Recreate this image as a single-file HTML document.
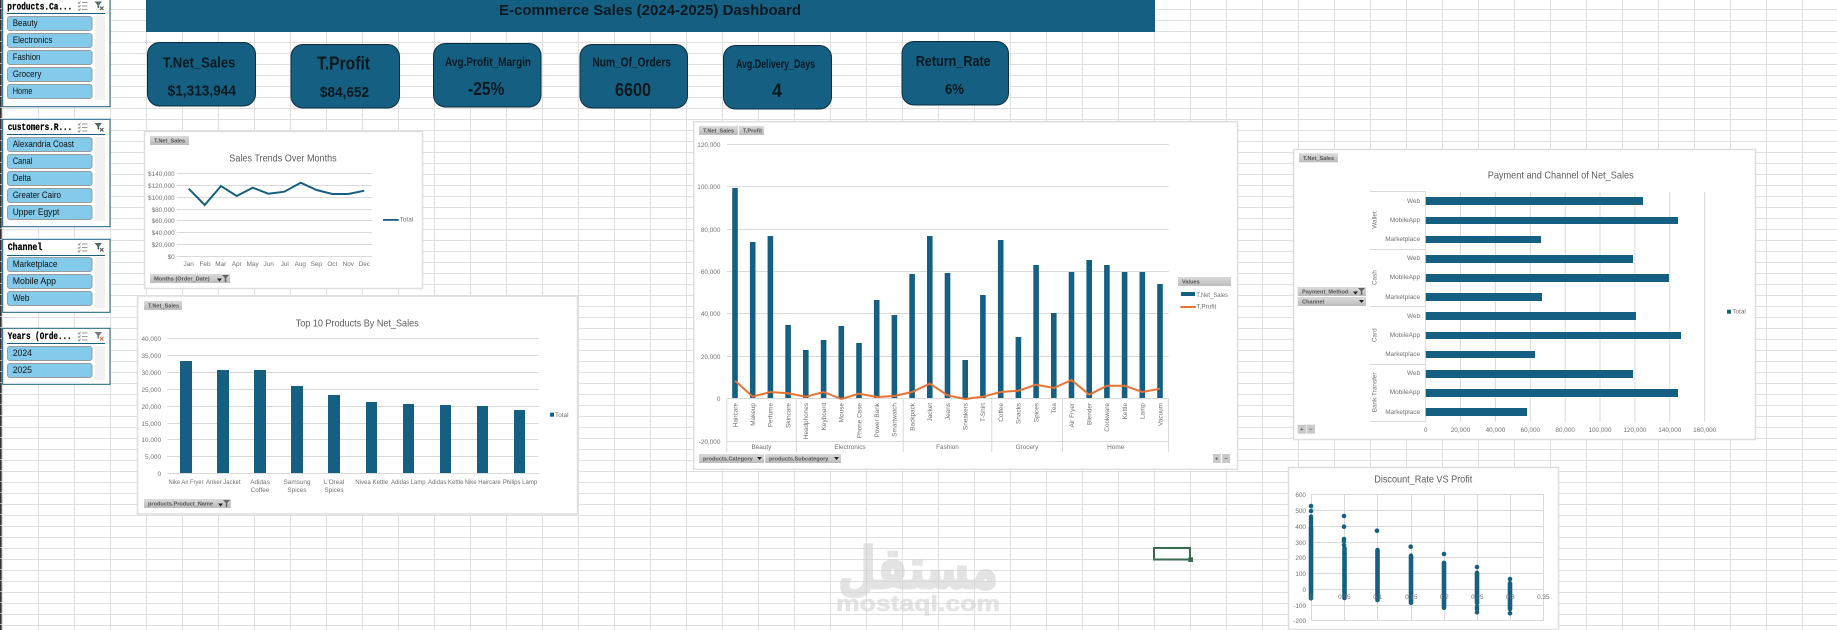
<!DOCTYPE html>
<html lang="en"><head><meta charset="utf-8"><title>E-commerce Sales Dashboard</title>
<style>
html,body{margin:0;padding:0;background:#fff;width:1837px;height:630px;overflow:hidden}
svg{display:block}
text{font-family:"Liberation Sans",sans-serif}
.a{font-size:6.4px;fill:#707070}
.e{text-anchor:end}.m{text-anchor:middle}
.ti{font-size:10.5px;fill:#5c5c5c}
.k{font-family:"Liberation Sans Narrow","Liberation Sans",sans-serif;font-weight:700;fill:#08181f}
.b{font-size:5.6px;fill:#555;font-weight:700}
.st{font-family:"Liberation Mono",monospace;font-weight:700;font-size:10px;fill:#000;stroke:#000;stroke-width:.25px}
.it{font-size:9px;fill:#111}
.card{fill:#156082;stroke:#0c2c3d;stroke-width:1}
.bar{fill:#156082}
.sl{fill:#fff;stroke:#156082;stroke-width:1}
.i{fill:#83CAEB;stroke:#9a9a9a;stroke-width:1}
.g{stroke:#d9d9d9;stroke-width:1;fill:none}
.box{fill:#fff;stroke:#dedede;stroke-width:1.5}
.btn{fill:url(#bg)}
</style></head><body>
<svg width="1837" height="630" viewBox="0 0 1837 630" xmlns="http://www.w3.org/2000/svg">
<defs>
<pattern id="grid" width="36" height="11" patternUnits="userSpaceOnUse" x="2" y="9">
<rect width="36" height="11" fill="#fff"/><rect width="1" height="11" fill="#dfdfdf"/><rect width="36" height="1" fill="#dfdfdf"/>
</pattern>
<pattern id="tick" width="3" height="11" patternUnits="userSpaceOnUse" y="9">
<rect width="1.7" height="10" fill="#333"/><rect width="1.7" y="10" height="1" fill="#aaa"/>
</pattern>
<linearGradient id="bg" x1="0" y1="0" x2="0" y2="1"><stop offset="0" stop-color="#dadada"/><stop offset="1" stop-color="#bcbcbc"/></linearGradient>
<symbol id="ms" width="11" height="9" viewBox="0 0 11 9" overflow="visible">
<path d="M1 1l1 1 1.5-2M1 4.5l1 1 1.5-2M1 8l1 1 1.5-2" fill="none" stroke="#8a8a8a" stroke-width="1"/>
<path d="M5 1h5.5M5 4.500h5.5M5 8h5.5" fill="none" stroke="#9a9a9a" stroke-width="1"/>
</symbol>
<symbol id="fc" width="10" height="9" viewBox="0 0 10 9" overflow="visible">
<path d="M0 0h7.5L4.6 3.500V7L3 6V3.500Z" fill="#4b6b60"/>
<path d="M5.500 5l3.500 3.500M9 5L5.500 8.500" stroke="#555" stroke-width="1.2"/>
</symbol>
<symbol id="fcr" width="10" height="9" viewBox="0 0 10 9" overflow="visible">
<path d="M0 0h7.5L4.6 3.500V7L3 6V3.500Z" fill="#777"/>
<path d="M5.500 5l3.500 3.500M9 5L5.500 8.500" stroke="#d9784a" stroke-width="1.2"/>
</symbol>
<symbol id="fl" width="12" height="7" viewBox="0 0 12 7" overflow="visible">
<path d="M0 3.500h5L2.500 6.500Z" fill="#222"/><path d="M5 0h7L9.300 3V7H7.800V3Z" fill="#666"/>
</symbol>
</defs>

<rect width="1837" height="630" fill="url(#grid)"/>
<rect width="2" height="630" fill="url(#tick)"/>

<!-- watermark -->
<g opacity=".6" fill="#d2d2d2">
<text x="918" y="588" class="m" font-size="57" font-weight="700" style="font-family:'DejaVu Sans',sans-serif" stroke="#d2d2d2" stroke-width="2.5" textLength="160" lengthAdjust="spacingAndGlyphs">مستقل</text>
<text x="836" y="611" font-size="22" font-weight="700" stroke="#d2d2d2" stroke-width=".6" textLength="164" lengthAdjust="spacingAndGlyphs">mostaql.com</text>
</g>

<!-- selected cell -->
<rect x="1154" y="548" width="36" height="11.5" fill="none" stroke="#3a6b52" stroke-width="2"/>
<rect x="1188.3" y="557.3" width="4.7" height="4.7" fill="#3a6b52"/>

<!-- header -->
<rect x="146" y="0" width="1009" height="32" fill="#156082"/>
<text x="499" y="15" font-size="15" font-weight="700" fill="#08181f" textLength="302" lengthAdjust="spacingAndGlyphs">E-commerce Sales (2024-2025) Dashboard</text>

<!-- KPI cards -->
<rect class="card" x="147.5" y="42.5" width="108" height="63.5" rx="12"/>
<rect class="card" x="291" y="44.5" width="108.5" height="63.5" rx="12"/>
<rect class="card" x="433.5" y="43.5" width="107.5" height="63.5" rx="12"/>
<rect class="card" x="580" y="44.5" width="107.5" height="63.5" rx="12"/>
<rect class="card" x="723.5" y="45.5" width="108" height="63.5" rx="12"/>
<rect class="card" x="902" y="41.5" width="106.5" height="63.5" rx="12"/>
<text class="k" x="162.6" y="67.5" font-size="15" textLength="72.8" lengthAdjust="spacingAndGlyphs">T.Net_Sales</text>
<text class="k" x="167.6" y="95.5" font-size="15" textLength="68.4" lengthAdjust="spacingAndGlyphs">$1,313,944</text>
<text class="k" x="317" y="69.5" font-size="18" textLength="53" lengthAdjust="spacingAndGlyphs">T.Profit</text>
<text class="k" x="320" y="97" font-size="15" textLength="49" lengthAdjust="spacingAndGlyphs">$84,652</text>
<text class="k" x="445" y="66" font-size="12" textLength="86" lengthAdjust="spacingAndGlyphs">Avg.Profit_Margin</text>
<text class="k" x="468" y="95" font-size="18" textLength="36.4" lengthAdjust="spacingAndGlyphs">-25%</text>
<text class="k" x="592.4" y="66.7" font-size="13" textLength="78.6" lengthAdjust="spacingAndGlyphs">Num_Of_Orders</text>
<text class="k" x="615" y="96" font-size="18" textLength="36" lengthAdjust="spacingAndGlyphs">6600</text>
<text class="k" x="736" y="68" font-size="11.5" textLength="79" lengthAdjust="spacingAndGlyphs">Avg.Delivery_Days</text>
<text class="k" x="772" y="97" font-size="19" textLength="10" lengthAdjust="spacingAndGlyphs">4</text>
<text class="k" x="915.7" y="66" font-size="15" textLength="75" lengthAdjust="spacingAndGlyphs">Return_Rate</text>
<text class="k" x="945" y="94" font-size="14.5" textLength="19" lengthAdjust="spacingAndGlyphs">6%</text>

<!-- slicer 1 -->
<rect class="sl" x="2.7" y="-5" width="107.3" height="111.7"/>
<text class="st" x="7.3" y="9.3" textLength="65" lengthAdjust="spacingAndGlyphs">products.Ca...</text>
<use href="#ms" x="77" y="1.5"/><use href="#fc" x="94.5" y="1.5"/>
<rect x="7" y="13" width="98" height="1" fill="#156082"/>
<rect x="95" y="16" width="10" height="84" fill="#f1f1f1"/>
<rect class="i" x="7.5" y="16.5" width="84.5" height="14" rx="2.5"/><text class="it" x="12.7" y="26" textLength="25" lengthAdjust="spacingAndGlyphs">Beauty</text>
<rect class="i" x="7.5" y="33.5" width="84.5" height="14" rx="2.5"/><text class="it" x="12.7" y="43" textLength="39.7" lengthAdjust="spacingAndGlyphs">Electronics</text>
<rect class="i" x="7.5" y="50.5" width="84.5" height="14" rx="2.5"/><text class="it" x="12.7" y="60" textLength="27.7" lengthAdjust="spacingAndGlyphs">Fashion</text>
<rect class="i" x="7.5" y="67.5" width="84.5" height="14" rx="2.5"/><text class="it" x="12.7" y="77" textLength="28.7" lengthAdjust="spacingAndGlyphs">Grocery</text>
<rect class="i" x="7.5" y="84.5" width="84.5" height="14" rx="2.5"/><text class="it" x="12.7" y="94" textLength="19.7" lengthAdjust="spacingAndGlyphs">Home</text>

<!-- slicer 2 -->
<rect class="sl" x="2.7" y="119.3" width="107.3" height="107.4"/>
<text class="st" x="7.7" y="130" textLength="64.6" lengthAdjust="spacingAndGlyphs">customers.R...</text>
<use href="#ms" x="77" y="123"/><use href="#fc" x="94.5" y="123"/>
<rect x="7" y="134" width="98" height="1" fill="#156082"/>
<rect x="95" y="137" width="10" height="84" fill="#f1f1f1"/>
<rect class="i" x="7.5" y="137.5" width="84.5" height="14" rx="2.5"/><text class="it" x="12.7" y="147" textLength="61.3" lengthAdjust="spacingAndGlyphs">Alexandria Coast</text>
<rect class="i" x="7.5" y="154.5" width="84.5" height="14" rx="2.5"/><text class="it" x="12.7" y="164" textLength="19.7" lengthAdjust="spacingAndGlyphs">Canal</text>
<rect class="i" x="7.5" y="171.5" width="84.5" height="14" rx="2.5"/><text class="it" x="12.7" y="181" textLength="18.3" lengthAdjust="spacingAndGlyphs">Delta</text>
<rect class="i" x="7.5" y="188.5" width="84.5" height="14" rx="2.5"/><text class="it" x="12.7" y="198" textLength="48.3" lengthAdjust="spacingAndGlyphs">Greater Cairo</text>
<rect class="i" x="7.5" y="205.5" width="84.5" height="14" rx="2.5"/><text class="it" x="12.7" y="215" textLength="46.7" lengthAdjust="spacingAndGlyphs">Upper Egypt</text>

<!-- slicer 3 -->
<rect class="sl" x="2.7" y="239.3" width="107.3" height="73"/>
<text class="st" x="7.7" y="250" textLength="34.6" lengthAdjust="spacingAndGlyphs">Channel</text>
<use href="#ms" x="77" y="243"/><use href="#fc" x="94.5" y="243"/>
<rect x="7" y="255" width="98" height="1" fill="#156082"/>
<rect x="95" y="257" width="10" height="51" fill="#f1f1f1"/>
<rect class="i" x="7.5" y="257.5" width="84.5" height="14" rx="2.5"/><text class="it" x="12.7" y="267" textLength="44.7" lengthAdjust="spacingAndGlyphs">Marketplace</text>
<rect class="i" x="7.5" y="274.5" width="84.5" height="14" rx="2.5"/><text class="it" x="12.7" y="284" textLength="43.3" lengthAdjust="spacingAndGlyphs">Mobile App</text>
<rect class="i" x="7.5" y="291.5" width="84.5" height="14" rx="2.5"/><text class="it" x="12.7" y="301" textLength="16.7" lengthAdjust="spacingAndGlyphs">Web</text>

<!-- slicer 4 -->
<rect class="sl" x="2.7" y="328.3" width="107.3" height="56"/>
<text class="st" x="7.7" y="339" textLength="64" lengthAdjust="spacingAndGlyphs">Years (Orde...</text>
<use href="#ms" x="77" y="332"/><use href="#fcr" x="94.5" y="332"/>
<rect x="7" y="343" width="98" height="1" fill="#156082"/>
<rect x="95" y="346" width="10" height="34" fill="#f1f1f1"/>
<rect class="i" x="7.5" y="346.5" width="84.5" height="14" rx="2.5"/><text class="it" x="12.7" y="356" textLength="19.3" lengthAdjust="spacingAndGlyphs">2024</text>
<rect class="i" x="7.5" y="363.5" width="84.5" height="14" rx="2.5"/><text class="it" x="12.7" y="373" textLength="19.3" lengthAdjust="spacingAndGlyphs">2025</text>

<!-- chart 1 sales trends -->
<rect class="box" x="144.5" y="131.5" width="278" height="157"/>
<rect class="btn" x="150" y="136" width="39" height="9"/>
<text class="b" x="154" y="142.5">T.Net_Sales</text>
<text class="ti" x="229.3" y="161.7" textLength="107.4" lengthAdjust="spacingAndGlyphs">Sales Trends Over Months</text>
<path class="g" d="M176.7 173.5H372.3M176.7 185.5H372.3M176.7 197.5H372.3M176.7 209.5H372.3M176.7 220.5H372.3M176.7 232.5H372.3M176.7 244.5H372.3M176.7 256.5H372.3"/>
<g class="a e">
<text x="174.7" y="175.8">$140,000</text><text x="174.7" y="187.8">$120,000</text><text x="174.7" y="199.8">$100,000</text><text x="174.7" y="211.8">$80,000</text><text x="174.7" y="222.8">$60,000</text><text x="174.7" y="234.8">$40,000</text><text x="174.7" y="246.8">$20,000</text><text x="174.7" y="258.8">$0</text>
</g>
<polyline points="188.7,188.7 204.7,205 221,186 236.7,196 252.7,187.7 268.3,193.7 284.3,191.7 300.7,182.7 316.7,190 332.3,194 348.3,194 364.3,190.7" fill="none" stroke="#156082" stroke-width="2"/>
<g class="a m">
<text x="188.7" y="266">Jan</text><text x="205" y="266">Feb</text><text x="220.7" y="266">Mar</text><text x="236.7" y="266">Apr</text><text x="252.7" y="266">May</text><text x="268.7" y="266">Jun</text><text x="284.7" y="266">Jul</text><text x="300.3" y="266">Aug</text><text x="316.3" y="266">Sep</text><text x="332.3" y="266">Oct</text><text x="348.3" y="266">Nov</text><text x="364.3" y="266">Dec</text>
</g>
<rect x="383" y="219" width="15.7" height="1.8" fill="#156082"/>
<text class="a" x="399.7" y="221.5">Total</text>
<rect class="btn" x="150" y="274" width="80" height="9"/>
<text class="b" x="154" y="280.5">Months (Order_Date)</text>
<use href="#fl" x="217" y="275"/>

<!-- chart 2 top 10 -->
<rect class="box" x="137.5" y="296" width="440" height="218"/>
<rect class="btn" x="144" y="301" width="38" height="9"/>
<text class="b" x="148" y="307.5">T.Net_Sales</text>
<text class="ti" x="295.7" y="326.7" textLength="123" lengthAdjust="spacingAndGlyphs">Top 10 Products By Net_Sales</text>
<path class="g" d="M167.3 338.5H538.7M167.3 355.5H538.7M167.3 372.5H538.7M167.3 389.5H538.7M167.3 406.5H538.7M167.3 423.5H538.7M167.3 439.5H538.7M167.3 456.5H538.7M167.3 473.5H538.7"/>
<g class="a e">
<text x="161" y="340.8">40,000</text><text x="161" y="357.8">35,000</text><text x="161" y="374.8">30,000</text><text x="161" y="391.8">25,000</text><text x="161" y="408.8">20,000</text><text x="161" y="425.8">15,000</text><text x="161" y="441.8">10,000</text><text x="161" y="458.8">5,000</text><text x="161" y="475.8">0</text>
</g>
<g class="bar">
<rect x="180" y="361" width="12" height="112"/><rect x="217" y="370" width="12" height="103"/><rect x="254" y="370" width="12" height="103"/><rect x="291" y="386" width="12" height="87"/><rect x="328" y="395" width="12" height="78"/><rect x="366" y="402" width="11" height="71"/><rect x="403" y="404" width="11" height="69"/><rect x="440" y="405" width="11" height="68"/><rect x="477" y="406" width="11" height="67"/><rect x="514" y="410" width="11" height="63"/>
</g>
<g class="a m">
<text x="186" y="484" textLength="35" lengthAdjust="spacingAndGlyphs">Nike Air Fryer</text><text x="223.3" y="484" textLength="34.5" lengthAdjust="spacingAndGlyphs">Anker Jacket</text>
<text x="260" y="484">Adidas</text><text x="260" y="492">Coffee</text>
<text x="297" y="484">Samsung</text><text x="297" y="492">Spices</text>
<text x="334" y="484">L'Oreal</text><text x="334" y="492">Spices</text>
<text x="371.7" y="484" textLength="33" lengthAdjust="spacingAndGlyphs">Nivea Kettle</text><text x="408.3" y="484" textLength="34.5" lengthAdjust="spacingAndGlyphs">Adidas Lamp</text><text x="445.7" y="484" textLength="35.5" lengthAdjust="spacingAndGlyphs">Adidas Kettle</text><text x="482.7" y="484" textLength="36" lengthAdjust="spacingAndGlyphs">Nike Haircare</text><text x="520" y="484" textLength="34.5" lengthAdjust="spacingAndGlyphs">Philips Lamp</text>
</g>
<rect x="550" y="412.7" width="4" height="4" fill="#156082"/>
<text class="a" x="555" y="417">Total</text>
<rect class="btn" x="144" y="499" width="87" height="9"/>
<text class="b" x="148" y="505.5">products.Product_Name</text>
<use href="#fl" x="218" y="500"/>

<!-- chart 3 big combo -->
<rect class="box" x="693.7" y="121.7" width="543.8" height="347.6"/>
<rect class="btn" x="699" y="126" width="39" height="9"/><text class="b" x="703" y="132.5">T.Net_Sales</text>
<rect class="btn" x="739" y="126" width="25" height="9"/><text class="b" x="743" y="132.5">T.Profit</text>
<path class="g" d="M726.8 144.5H1168.6M726.8 186.5H1168.6M726.8 229.5H1168.6M726.8 271.5H1168.6M726.8 313.5H1168.6M726.8 356.5H1168.6M726.8 398.5H1168.6M726.8 441.5H1168.6"/>
<path class="g" d="M726.8 398V452M796.4 398V452M903.2 398V452M991.8 398V452M1062.5 398V452M1168.6 398V452"/>
<g class="a e">
<text x="720.4" y="146.8">120,000</text><text x="720.4" y="188.8">100,000</text><text x="720.4" y="231.8">80,000</text><text x="720.4" y="273.8">60,000</text><text x="720.4" y="315.8">40,000</text><text x="720.4" y="358.8">20,000</text><text x="720.4" y="400.8">0</text><text x="720.4" y="443.8">-20,000</text>
</g>
<g class="bar">
<rect x="732.2" y="188" width="5.6" height="210"/><rect x="749.9" y="242" width="5.6" height="156"/><rect x="767.6" y="236" width="5.6" height="162"/><rect x="785.3" y="325" width="5.6" height="73"/><rect x="803" y="350" width="5.6" height="48"/><rect x="820.8" y="340" width="5.6" height="58"/><rect x="838.5" y="326" width="5.6" height="72"/><rect x="856.2" y="343" width="5.6" height="55"/><rect x="873.9" y="300" width="5.6" height="98"/><rect x="891.6" y="315" width="5.6" height="83"/><rect x="909.3" y="274" width="5.6" height="124"/><rect x="927" y="236" width="5.6" height="162"/><rect x="944.7" y="273" width="5.6" height="125"/><rect x="962.4" y="360" width="5.6" height="38"/><rect x="980.1" y="295" width="5.6" height="103"/><rect x="997.9" y="240" width="5.6" height="158"/><rect x="1015.6" y="337" width="5.6" height="61"/><rect x="1033.3" y="265" width="5.6" height="133"/><rect x="1051" y="313" width="5.6" height="85"/><rect x="1068.7" y="272" width="5.6" height="126"/><rect x="1086.4" y="260" width="5.6" height="138"/><rect x="1104.1" y="265" width="5.6" height="133"/><rect x="1121.8" y="272" width="5.6" height="126"/><rect x="1139.5" y="272" width="5.6" height="126"/><rect x="1157.2" y="284" width="5.6" height="114"/>
</g>
<polyline points="735,380.7 752.7,396.7 770.4,392 788.1,393.3 805.8,396.7 823.6,392 841.3,399 859,393.7 876.7,397 894.4,396 912.1,392 929.8,383.7 947.5,395.3 965.2,399 982.9,396.7 1000.7,392 1018.4,390.7 1036.1,384.7 1053.8,388 1071.5,380 1089.2,394.7 1106.9,385.7 1124.6,385.7 1142.3,392 1160,388.7" fill="none" stroke="#E97132" stroke-width="2"/>
<g class="a e">
<text transform="translate(737.3 403) rotate(-90)">Haircare</text><text transform="translate(755 403) rotate(-90)">Makeup</text><text transform="translate(772.7 403) rotate(-90)">Perfume</text><text transform="translate(790.4 403) rotate(-90)">Skincare</text><text transform="translate(808.1 403) rotate(-90)">Headphones</text><text transform="translate(825.9 403) rotate(-90)">Keyboard</text><text transform="translate(843.6 403) rotate(-90)">Mouse</text><text transform="translate(861.3 403) rotate(-90)">Phone Case</text><text transform="translate(879 403) rotate(-90)">Power Bank</text><text transform="translate(896.7 403) rotate(-90)">Smartwatch</text><text transform="translate(914.4 403) rotate(-90)">Backpack</text><text transform="translate(932.1 403) rotate(-90)">Jacket</text><text transform="translate(949.8 403) rotate(-90)">Jeans</text><text transform="translate(967.5 403) rotate(-90)">Sneakers</text><text transform="translate(985.2 403) rotate(-90)">T-Shirt</text><text transform="translate(1003 403) rotate(-90)">Coffee</text><text transform="translate(1020.7 403) rotate(-90)">Snacks</text><text transform="translate(1038.4 403) rotate(-90)">Spices</text><text transform="translate(1056.1 403) rotate(-90)">Tea</text><text transform="translate(1073.8 403) rotate(-90)">Air Fryer</text><text transform="translate(1091.5 403) rotate(-90)">Blender</text><text transform="translate(1109.2 403) rotate(-90)">Cookware</text><text transform="translate(1126.9 403) rotate(-90)">Kettle</text><text transform="translate(1144.6 403) rotate(-90)">Lamp</text><text transform="translate(1162.3 403) rotate(-90)">Vacuum</text>
</g>
<g class="a m">
<text x="761.4" y="449">Beauty</text><text x="850" y="449">Electronics</text><text x="947.5" y="449">Fashion</text><text x="1027" y="449">Grocery</text><text x="1115.7" y="449">Home</text>
</g>
<rect class="btn" x="1178" y="277" width="53" height="9"/><text class="b" x="1182" y="283.5">Values</text>
<rect x="1181" y="292" width="14" height="4" fill="#156082"/><text class="a" x="1196.4" y="297" textLength="31.6" lengthAdjust="spacingAndGlyphs">T.Net_Sales</text>
<rect x="1180.4" y="306" width="15.3" height="2" fill="#E97132"/><text class="a" x="1196.4" y="308.5">T.Profit</text>
<rect class="btn" x="699" y="454" width="65" height="9"/><text class="b" x="703" y="460.5">products.Category</text>
<path d="M757 457h5l-2.5 3z" fill="#222"/>
<rect class="btn" x="765" y="454" width="76" height="9"/><text class="b" x="769" y="460.5">products.Subcategory</text>
<path d="M834 457h5l-2.5 3z" fill="#222"/>
<rect x="1213" y="454" width="7.7" height="9" fill="#c9c9c9"/><text class="b m" x="1216.8" y="460.5">+</text>
<rect x="1222" y="454" width="8" height="9" fill="#c9c9c9"/><text class="b m" x="1226" y="460.5">−</text>

<!-- chart 4 payment -->
<rect class="box" x="1293.5" y="149.5" width="462" height="290"/>
<rect class="btn" x="1299" y="153.3" width="39" height="9"/><text class="b" x="1303" y="159.8">T.Net_Sales</text>
<text class="ti" x="1487.7" y="178.7" textLength="146" lengthAdjust="spacingAndGlyphs">Payment and Channel of Net_Sales</text>
<path class="g" d="M1425.7 191.7V421.7M1460.5 191.7V421.7M1495.4 191.7V421.7M1530.3 191.7V421.7M1565.2 191.7V421.7M1600 191.7V421.7M1634.9 191.7V421.7M1669.8 191.7V421.7M1704.7 191.7V421.7"/>
<path class="g" d="M1370 191.5H1425.7M1370 249.5H1425.7M1370 306.5H1425.7M1370 364.5H1425.7M1370 421.5H1425.7"/>
<g class="bar">
<rect x="1425.7" y="197" width="217.3" height="8"/><rect x="1425.7" y="217" width="252.3" height="7"/><rect x="1425.7" y="236" width="115.3" height="7"/><rect x="1425.7" y="255" width="207.3" height="8"/><rect x="1425.7" y="274" width="243.3" height="8"/><rect x="1425.7" y="293" width="116.3" height="8"/><rect x="1425.7" y="312" width="210.3" height="8"/><rect x="1425.7" y="332" width="255.3" height="7"/><rect x="1425.7" y="351" width="109.3" height="7"/><rect x="1425.7" y="370" width="207.3" height="8"/><rect x="1425.7" y="389" width="252.3" height="8"/><rect x="1425.7" y="408" width="101.3" height="8"/>
</g>
<g class="a e">
<text x="1420" y="203">Web</text><text x="1420" y="222">MobileApp</text><text x="1420" y="241">Marketplace</text><text x="1420" y="260">Web</text><text x="1420" y="279">MobileApp</text><text x="1420" y="299">Marketplace</text><text x="1420" y="318">Web</text><text x="1420" y="337">MobileApp</text><text x="1420" y="356">Marketplace</text><text x="1420" y="375">Web</text><text x="1420" y="394">MobileApp</text><text x="1420" y="414">Marketplace</text>
</g>
<g class="a m">
<text transform="translate(1376.5 220) rotate(-90)">Wallet</text><text transform="translate(1376.5 277.7) rotate(-90)">Cash</text><text transform="translate(1376.5 335.3) rotate(-90)">Card</text><text transform="translate(1376.5 392.3) rotate(-90)">Bank Transfer</text>
<text x="1425.7" y="432">0</text><text x="1460.5" y="432">20,000</text><text x="1495.4" y="432">40,000</text><text x="1530.3" y="432">60,000</text><text x="1565.2" y="432">80,000</text><text x="1600" y="432">100,000</text><text x="1634.9" y="432">120,000</text><text x="1669.8" y="432">140,000</text><text x="1704.7" y="432">160,000</text>
</g>
<rect x="1727" y="309.7" width="4" height="4" fill="#156082"/><text class="a" x="1732.3" y="313.5">Total</text>
<rect class="btn" x="1297.7" y="287" width="68.3" height="9"/><text class="b" x="1302" y="293.5">Payment_Method</text>
<use href="#fl" x="1353" y="288"/>
<rect class="btn" x="1297.7" y="297" width="68.3" height="9"/><text class="b" x="1302" y="303.5">Channel</text>
<path d="M1359 300h5l-2.5 3z" fill="#222"/>
<rect x="1297.7" y="424.7" width="8.3" height="9" fill="#c9c9c9"/><text class="b m" x="1301.8" y="431">+</text>
<rect x="1306.7" y="424.7" width="8.3" height="9" fill="#c9c9c9"/><text class="b m" x="1310.8" y="431">−</text>

<!-- chart 5 scatter -->
<rect class="box" x="1288.5" y="467.5" width="270" height="162"/>
<text class="ti" x="1374.3" y="482.7" textLength="98" lengthAdjust="spacingAndGlyphs">Discount_Rate VS Profit</text>
<path class="g" d="M1311 494.5H1543.5M1311 510.5H1543.5M1311 526.5H1543.5M1311 542.5H1543.5M1311 557.5H1543.5M1311 573.5H1543.5M1311 589.5H1543.5M1311 605.5H1543.5M1311 620.5H1543.5"/>
<path class="g" d="M1311.5 494V621M1344.5 494V621M1377.5 494V621M1411.5 494V621M1444.5 494V621M1477.5 494V621M1510.5 494V621M1543.5 494V621"/>
<g class="a e">
<text x="1306" y="496.8">600</text><text x="1306" y="512.8">500</text><text x="1306" y="528.8">400</text><text x="1306" y="544.8">300</text><text x="1306" y="559.8">200</text><text x="1306" y="575.8">100</text><text x="1306" y="591.8">0</text><text x="1306" y="607.8">-100</text><text x="1306" y="622.8">-200</text>
</g>
<g fill="none" stroke="#156082" stroke-width="4.6" stroke-linecap="round">
<path d="M1311 526.7V598.3M1344.5 548.3V598M1377.5 550V600M1411 555.7V602.7M1444 563V607.7M1477 572.7V603M1510 583.3V609"/>
</g>
<g fill="#156082">
<circle cx="1311" cy="506" r="2.3"/><circle cx="1311" cy="511" r="2.3"/><circle cx="1311" cy="516.7" r="2.3"/><circle cx="1311" cy="519.3" r="2.3"/><circle cx="1311" cy="521.7" r="2.3"/><circle cx="1311" cy="524" r="2.3"/>
<circle cx="1344" cy="516" r="2.3"/><circle cx="1344" cy="526.7" r="2.3"/><circle cx="1344" cy="539" r="2.3"/><circle cx="1344" cy="541" r="2.3"/><circle cx="1344" cy="545" r="2.3"/>
<circle cx="1377" cy="530.7" r="2.3"/><circle cx="1410.7" cy="546.7" r="2.3"/><circle cx="1444" cy="554" r="2.3"/><circle cx="1444" cy="563" r="2.3"/><circle cx="1477" cy="567" r="2.3"/><circle cx="1477" cy="606.7" r="2.3"/><circle cx="1477" cy="609" r="2.3"/><circle cx="1477" cy="612.3" r="2.3"/><circle cx="1510" cy="579" r="2.3"/><circle cx="1510" cy="613.3" r="2.3"/>
</g>
<g class="a m">
<text x="1311" y="599">0</text><text x="1344.3" y="599">0.05</text><text x="1377.7" y="599">0.1</text><text x="1411.3" y="599">0.15</text><text x="1444.3" y="599">0.2</text><text x="1477.3" y="599">0.25</text><text x="1510.3" y="599">0.3</text><text x="1543.3" y="599">0.35</text>
</g>
</svg>
</body></html>
